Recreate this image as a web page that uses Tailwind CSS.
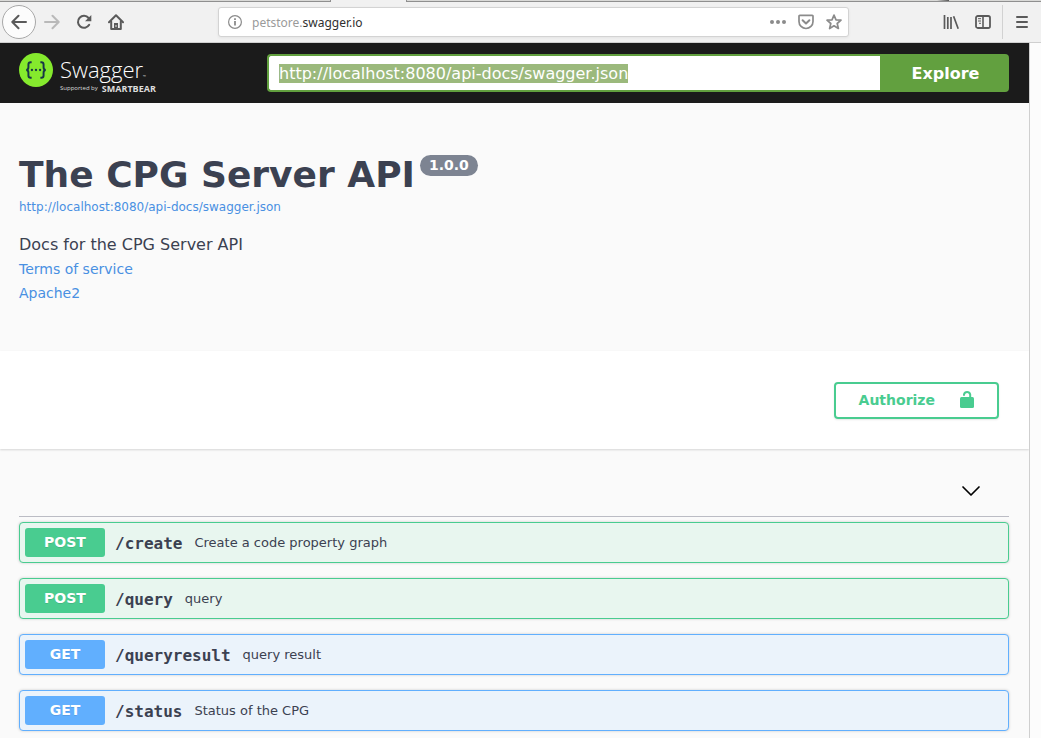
<!DOCTYPE html>
<html lang="en">
<head>
<meta charset="utf-8">
<meta name="viewport" content="width=device-width, initial-scale=1">
<title>Swagger UI</title>
<script src="https://cdn.jsdelivr.net/npm/@tailwindcss/browser@4"></script>
</head>
<body class="flex h-screen flex-col overflow-hidden bg-[#fafafa] font-['DejaVu_Sans',sans-serif] text-[#3b4151]">

<!-- Browser toolbar -->
<div class="shrink-0 bg-[#f1f1f1]">
  <div class="flex h-[2px]">
    <div class="w-[331px] border-r border-b border-[#8f8f8f] bg-[#d9d9d7]"></div>
    <div class="w-[75px]"></div>
    <div class="flex flex-1 justify-end border-b border-l border-[#8f8f8f] bg-[#d9d9d7] pr-[92px]">
      <span class="h-px w-3 bg-linear-to-r from-[#d9d9d7] to-[#555555]"></span>
    </div>
  </div>
  <nav class="flex h-[41px] items-center border-b border-[#cfcfcf] pb-px pl-[2px] text-[#5a5a5a]" aria-label="Browser">
    <button class="grid size-[34px] place-items-center rounded-full border border-[#a8a8a8] bg-[#fcfcfc]" aria-label="Back">
      <svg class="size-4" viewBox="0 0 16 16" fill="none" stroke="currentColor" stroke-width="2" stroke-linecap="round" stroke-linejoin="round"><path d="M15 8H1.500M7.500 1.800 1.300 8l6.200 6.200"/></svg>
    </button>
    <button class="ml-2 text-[#b9b9b9]" aria-label="Forward">
      <svg class="size-4" viewBox="0 0 16 16" fill="none" stroke="currentColor" stroke-width="2" stroke-linecap="round" stroke-linejoin="round"><path d="M1 8h13.500M8.500 1.800 14.700 8l-6.200 6.200"/></svg>
    </button>
    <button class="ml-4" aria-label="Reload">
      <svg class="size-4" viewBox="0 0 16 16" fill="none" stroke="currentColor" stroke-width="2" stroke-linecap="round"><path d="M13.200 10.800A6 6 0 1 1 12.600 4"/><path d="M15.300 1v6.300H9z" fill="currentColor" stroke="none"/></svg>
    </button>
    <button class="ml-4" aria-label="Home">
      <svg class="size-4" viewBox="0 0 16 16" fill="none" stroke="currentColor" stroke-width="2" stroke-linecap="round" stroke-linejoin="round"><path d="M1 8.200 8 1.300l7 6.900"/><path d="M3.200 7.500V15h9.600V7.500"/><path d="M6 15V9h4v6z" fill="currentColor" stroke="none"/><path d="M8 11.500v1" stroke="#f1f1f1" stroke-width="1"/></svg>
    </button>
    <div class="ml-[94px] flex h-[30px] w-[631px] items-center rounded-[3px] border border-[#d3d3d3] bg-white pr-[6px] pl-[9px] text-[#8b8b8b] shadow-[0_1px_3px_rgba(0,0,0,0.06)]">
      <svg class="size-[14px]" viewBox="0 0 14 14" fill="none" stroke="currentColor"><circle cx="7" cy="7" r="6.400" stroke-width="1.200"/><path d="M7 6v4.500M7 3.200v1.700" stroke-width="1.800"/></svg>
      <a href="#" class="ml-[10px] flex-1 pt-[2px] font-['Noto_Sans',sans-serif] text-[12px] text-[#9a9a9a]">petstore.<span class="text-[#2f2f2f]">swagger.io</span></a>
      <button class="mr-3" aria-label="Page actions">
        <svg class="size-4" viewBox="0 0 16 16" fill="currentColor"><circle cx="2" cy="8" r="2"/><circle cx="8" cy="8" r="2"/><circle cx="14" cy="8" r="2"/></svg>
      </button>
      <button class="mr-3" aria-label="Save to Pocket">
        <svg class="size-4" viewBox="0 0 16 16" fill="none" stroke="currentColor" stroke-width="1.700" stroke-linecap="round" stroke-linejoin="round"><path d="M1 2.200a.8.8 0 0 1 .8-.8h12.400a.8.8 0 0 1 .8.800V7.500a7 7 0 0 1-14 0z"/><path d="m4.600 6.200 3.400 3.300 3.400-3.300" stroke-width="2"/></svg>
      </button>
      <button aria-label="Bookmark">
        <svg class="size-4" viewBox="0 0 16 16" fill="none" stroke="currentColor" stroke-width="1.700" stroke-linejoin="round"><path d="m8 1.100 2 4.700 5 .4-3.800 3.300 1.200 5L8 11.800l-4.400 2.700 1.200-5L1 6.200l5-.4z"/></svg>
      </button>
    </div>
    <div class="ml-auto flex items-center pr-3">
      <button class="mr-4" aria-label="Library">
        <svg class="size-4" viewBox="0 0 16 16" fill="none" stroke="currentColor" stroke-width="1.700"><path d="M1.500 1v14M4.800 3v12M8 3v12M10.600 2.200l4.600 12.600"/></svg>
      </button>
      <button class="mr-[11px]" aria-label="Sidebars">
        <svg class="size-4" viewBox="0 0 16 16" fill="none" stroke="currentColor"><rect x="1" y="2" width="14" height="12" rx="1.800" stroke-width="1.800"/><path d="M8 2v12" stroke-width="1.600"/><path d="M3 4.700h3M3 7h3M4 9.300h2" stroke-width="1"/></svg>
      </button>
      <span class="h-[34px] w-px bg-[#d2d2d2]"></span>
      <button class="ml-3" aria-label="Menu">
        <svg class="h-4 w-[14px]" viewBox="0 0 14 16" fill="none" stroke="currentColor" stroke-width="2" stroke-linecap="round"><path d="M2 3h10M2 8h10M2 13h10"/></svg>
      </button>
    </div>
  </nav>
</div>

<div class="flex min-h-0 flex-1">
  <div class="min-w-0 flex-1 overflow-hidden">
    <header class="flex h-[60px] items-center bg-[#1b1b1b] pr-5 pl-[19px]">
      <a href="#" class="flex w-[248px] shrink-0 items-start text-white" aria-label="Swagger, supported by SmartBear">
        <svg class="size-[34px]" viewBox="0 0 35 35" fill="none" stroke="#173647"><circle cx="17.500" cy="17.500" r="17.500" fill="#85ea2d" stroke="none"/><path d="M13 9.600h-1c-1.700 0-2.300.8-2.300 2.300v2.800c0 1.700-.7 2.800-2.300 2.800 1.600 0 2.300 1.100 2.300 2.800v2.800c0 1.500.6 2.300 2.300 2.300h1M22 9.600h1c1.700 0 2.300.8 2.300 2.300v2.800c0 1.700.7 2.800 2.300 2.800-1.600 0-2.300 1.100-2.300 2.800v2.800c0 1.500-.6 2.300-2.300 2.300h-1" stroke-width="2"/><g fill="#173647" stroke="none"><circle cx="13.300" cy="17.500" r="1.200"/><circle cx="17.500" cy="17.500" r="1.200"/><circle cx="21.700" cy="17.500" r="1.200"/></g></svg>
        <span class="ml-[7px] flex flex-col pt-[2px] font-['Open_Sans',sans-serif]">
          <span class="h-[29px] text-[22px] leading-[29px] font-light">Swagger<span class="text-[4px] leading-none">™</span></span>
          <span class="flex h-[9px] items-center gap-1 text-[6px] leading-[9px] whitespace-nowrap text-[#dddddd]">Supported by <b class="text-[9px] font-bold">SMARTBEAR</b></span>
        </span>
      </a>
      <form class="flex h-[38px] flex-1" onsubmit="return false">
        <input id="spec" type="text" aria-label="API definition URL" value="http://localhost:8080/api-docs/swagger.json" spellcheck="false" class="min-w-0 flex-1 rounded-l-[4px] border-2 border-r-0 border-[#62a03f] bg-white px-[10px] text-[16px] leading-[19px] text-[#3b4151] outline-none selection:bg-[#9bb97c] selection:text-white">
        <button class="w-[129px] rounded-r-[4px] bg-[#62a03f] pt-[2px] pl-[2px] text-[16px] font-bold text-white">Explore</button>
      </form>
    </header>

    <section class="h-[248px] px-[19px] pt-[50px]">
      <div class="flex items-start gap-[5px]">
        <h1 class="text-[36px] leading-[44px] font-bold">The CPG Server API</h1>
        <span class="mt-[2px] rounded-full bg-[#7d8492] px-[9px] text-[14px] leading-[21px] font-bold text-white">1.0.0</span>
      </div>
      <a href="#" class="mt-[2px] block text-[12px] leading-4 text-[#4990e2]">http://localhost:8080/api-docs/swagger.json</a>
      <p class="mt-[18px] text-[16px] leading-6">Docs for the CPG Server API</p>
      <a href="#" class="block text-[14px] leading-6 text-[#4990e2]">Terms of service</a>
      <a href="#" class="block text-[14px] leading-6 text-[#4990e2]">Apache2</a>
    </section>

    <section class="flex h-[98px] items-center justify-end bg-white pr-[30px] shadow-[0_1px_2px_rgba(0,0,0,0.15)]">
      <button class="flex h-[37px] items-center rounded-[4px] border-2 border-[#49cc90] pr-[21px] pl-[23px] text-[14px] font-bold text-[#49cc90] shadow-[0_1px_2px_rgba(0,0,0,0.1)]">Authorize
        <svg class="ml-[23px] size-[18px]" viewBox="0 0 18 18"><rect x="2" y="6" width="14" height="11" rx="1.500" fill="#49cc90"/><path d="M6 4V3.500a3.200 3.200 0 0 1 6.200 0V7" fill="none" stroke="#49cc90" stroke-width="2" stroke-linecap="round"/></svg>
      </button>
    </section>

    <main class="pr-5 pl-[19px]">
      <div class="flex h-[68px] items-center justify-end border-b border-[#bbbcc4] pt-4 pr-7">
        <button aria-label="Collapse operations">
          <svg class="h-5 w-5" viewBox="0 0 20 20" fill="none" stroke="#000" stroke-width="1.700" stroke-linecap="round" stroke-linejoin="round"><path d="m2 6 8 8 8-8"/></svg>
        </button>
      </div>
      <div class="flex flex-col gap-[15px] pt-[5px]">
        <button class="flex h-[41px] items-center rounded-[4px] border border-[#49cc90] bg-[#e8f6ef] px-[5px] text-left shadow-[0_0_3px_rgba(0,0,0,0.19)]">
          <span class="w-20 rounded-[3px] bg-[#49cc90] text-center text-[14px] leading-[29px] font-bold text-white [text-shadow:0_1px_0_rgba(0,0,0,0.1)]">POST</span>
          <span class="pt-[2px] pr-3 pl-[10px] font-['DejaVu_Sans_Mono',monospace] text-[16px] font-bold">/create</span>
          <span class="text-[13px]">Create a code property graph</span>
        </button>
        <button class="flex h-[41px] items-center rounded-[4px] border border-[#49cc90] bg-[#e8f6ef] px-[5px] text-left shadow-[0_0_3px_rgba(0,0,0,0.19)]">
          <span class="w-20 rounded-[3px] bg-[#49cc90] text-center text-[14px] leading-[29px] font-bold text-white [text-shadow:0_1px_0_rgba(0,0,0,0.1)]">POST</span>
          <span class="pt-[2px] pr-3 pl-[10px] font-['DejaVu_Sans_Mono',monospace] text-[16px] font-bold">/query</span>
          <span class="text-[13px]">query</span>
        </button>
        <button class="flex h-[41px] items-center rounded-[4px] border border-[#61affe] bg-[#ebf3fb] px-[5px] text-left shadow-[0_0_3px_rgba(0,0,0,0.19)]">
          <span class="w-20 rounded-[3px] bg-[#61affe] text-center text-[14px] leading-[29px] font-bold text-white [text-shadow:0_1px_0_rgba(0,0,0,0.1)]">GET</span>
          <span class="pt-[2px] pr-3 pl-[10px] font-['DejaVu_Sans_Mono',monospace] text-[16px] font-bold">/queryresult</span>
          <span class="text-[13px]">query result</span>
        </button>
        <button class="flex h-[41px] items-center rounded-[4px] border border-[#61affe] bg-[#ebf3fb] px-[5px] text-left shadow-[0_0_3px_rgba(0,0,0,0.19)]">
          <span class="w-20 rounded-[3px] bg-[#61affe] text-center text-[14px] leading-[29px] font-bold text-white [text-shadow:0_1px_0_rgba(0,0,0,0.1)]">GET</span>
          <span class="pt-[2px] pr-3 pl-[10px] font-['DejaVu_Sans_Mono',monospace] text-[16px] font-bold">/status</span>
          <span class="text-[13px]">Status of the CPG</span>
        </button>
      </div>
    </main>
  </div>
  <div class="w-3 shrink-0 border-l border-[#cfcfcf] bg-[#fcfcfc]"></div>
</div>

<script>
  const spec = document.getElementById('spec');
  spec.focus();
  spec.select();
</script>
</body>
</html>
